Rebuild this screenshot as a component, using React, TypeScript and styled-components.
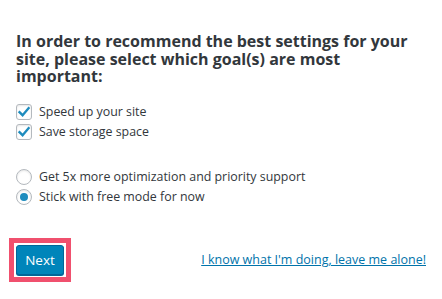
import React from "react";
import styled, { createGlobalStyle } from "styled-components";

const Global = createGlobalStyle`
  html, body { margin: 0; padding: 0; background: #ffffff; }
  body { font-family: "Open Sans", "Noto Sans", sans-serif; color: #444444; }
`;

const Page = styled.div`
  width: 442px;
  height: 299px;
  box-sizing: border-box;
  padding: 33px 16px 0 16px;
  background: #ffffff;
`;

const Heading = styled.h2`
  margin: 0;
  font-size: 16px;
  line-height: 17.5px;
  font-weight: 700;
  color: #32373c;
  width: 400px;
`;

const Group = styled.div<{ $mt: number }>`
  display: flex;
  flex-direction: column;
  gap: 4px;
  margin-top: ${(p) => p.$mt}px;
`;

const Option = styled.label`
  display: flex;
  align-items: center;
  gap: 7px;
  font-size: 12.4px;
  line-height: 16px;
  color: #32373c;
`;

const Box = styled.span`
  width: 16px;
  height: 16px;
  box-sizing: border-box;
  border: 1px solid #b4b9be;
  border-radius: 3px;
  box-shadow: inset 0 1px 2px rgba(0, 0, 0, 0.1);
  display: flex;
  align-items: center;
  justify-content: center;
  flex: none;
`;

const Radio = styled.span<{ $on?: boolean }>`
  width: 16px;
  height: 16px;
  box-sizing: border-box;
  border: 1px solid #b4b9be;
  border-radius: 50%;
  box-shadow: inset 0 1px 2px rgba(0, 0, 0, 0.1);
  display: flex;
  align-items: center;
  justify-content: center;
  flex: none;
  &::after {
    content: "";
    display: ${(p) => (p.$on ? "block" : "none")};
    width: 8px;
    height: 8px;
    border-radius: 50%;
    background: #1e8cbe;
  }
`;

const Footer = styled.div`
  display: flex;
  align-items: center;
  justify-content: space-between;
  margin-top: 33px;
  margin-left: -7px;
`;

const Frame = styled.div`
  border: 5px solid #f0506e;
  padding: 2px;
  background: #ffffff;
`;

const Button = styled.button`
  display: block;
  width: 48px;
  height: 30px;
  border: 1px solid #006799;
  border-radius: 3px;
  background: #0085ba;
  color: #ffffff;
  font-family: "Open Sans", "Noto Sans", sans-serif;
  font-size: 13.5px;
  padding: 0;
  box-shadow: 0 1px 0 #006799;
`;

const Link = styled.a`
  color: #0073aa;
  font-size: 12.5px;
  text-decoration: underline;
`;

const Check = () => (
  <svg width="14" height="14" viewBox="0 0 14 14">
    <path d="M2.5 7.2 L5.6 10.2 L11.6 3.2" fill="none" stroke="#1e8cbe" strokeWidth="2.3" strokeLinecap="square" />
  </svg>
);

export default function App() {
  return (
    <Page>
      <Global />
      <Heading>
        In order to recommend the best settings for your site, please select which goal(s) are most important:
      </Heading>
      <Group $mt={18}>
        <Option>
          <Box><Check /></Box>
          Speed up your site
        </Option>
        <Option>
          <Box><Check /></Box>
          Save storage space
        </Option>
      </Group>
      <Group $mt={29}>
        <Option>
          <Radio />
          Get 5x more optimization and priority support
        </Option>
        <Option>
          <Radio $on />
          Stick with free mode for now
        </Option>
      </Group>
      <Footer>
        <Frame>
          <Button>Next</Button>
        </Frame>
        <Link href="#">I know what I'm doing, leave me alone!</Link>
      </Footer>
    </Page>
  );
}
